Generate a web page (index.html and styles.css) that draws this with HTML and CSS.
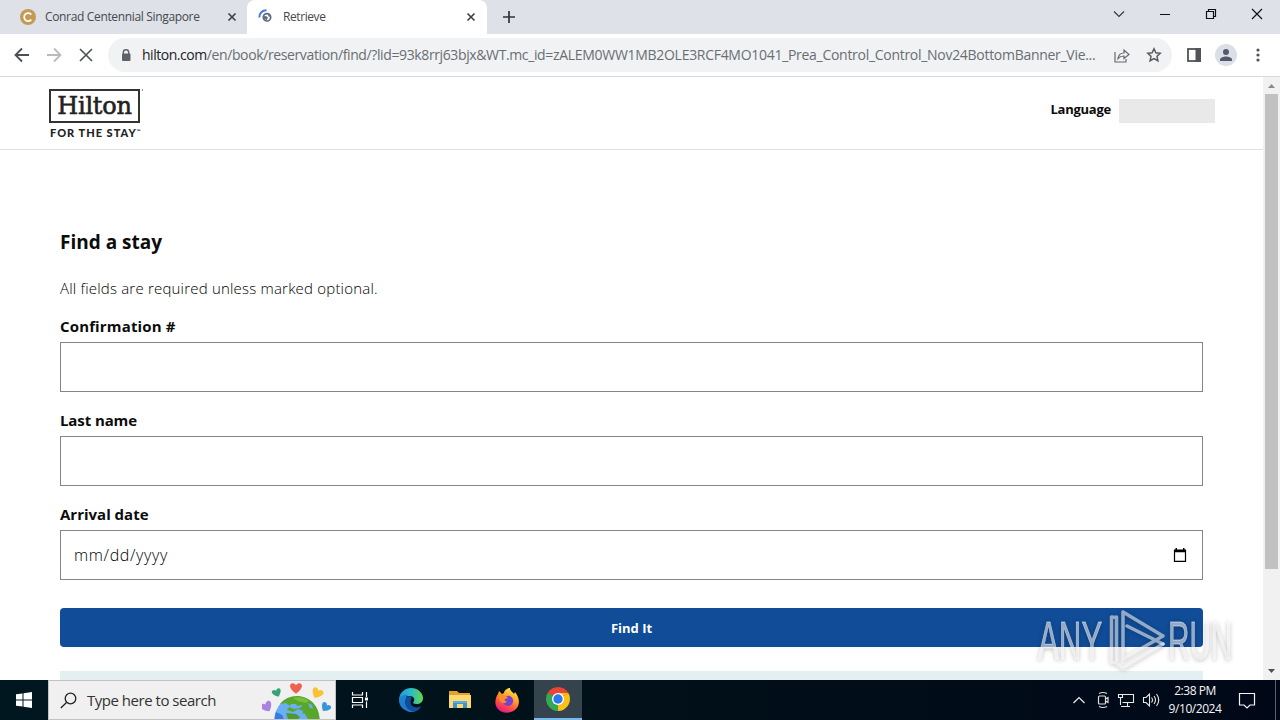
FILE: index.html
```
<!DOCTYPE html>
<html lang="en">
<head>
<meta charset="utf-8">
<title>Retrieve</title>
<link rel="stylesheet" href="styles.css">
</head>
<body>
<div class="screen">
  <div class="tabstrip">
    <div class="tab tab-first">
      <svg class="favicon" width="16" height="16" viewBox="0 0 16 16"><circle cx="8" cy="8" r="8" fill="#c49a55"/><path d="M11.3 5.6A4 4 0 1 0 11.3 10.6" fill="none" stroke="#fff" stroke-width="1.7"/></svg>
      <span class="tab-title title-conrad">Conrad Centennial Singapore</span>
      <svg class="tab-close" width="10" height="10" viewBox="0 0 10 10"><path d="M1.5 1.5l7 7M8.5 1.5l-7 7" stroke="#3c4043" stroke-width="1.6"/></svg>
    </div>
    <div class="tab tab-active">
      <svg class="favicon" width="16" height="16" viewBox="0 0 16 16"><path d="M1.300 8.500A7 7 0 0 1 8.500 1.200" fill="none" stroke="#3f7be0" stroke-width="1.900"/><circle cx="9" cy="8.300" r="3.700" fill="none" stroke="#5f6b7a" stroke-width="1.700"/><path d="M5.500 7l3 .2 1.500 1.600-1.500 2.500L6 9.500zM9.500 5l3 2-1.500 1z" fill="#5f6b7a"/></svg>
      <span class="tab-title title-retrieve">Retrieve</span>
      <svg class="tab-close" width="10" height="10" viewBox="0 0 10 10"><path d="M1.500 1.500l7 7M8.500 1.500l-7 7" stroke="#3c4043" stroke-width="1.600"/></svg>
    </div>
    <svg class="newtab" width="12" height="12" viewBox="0 0 12 12"><path d="M6 0v12M0 6h12" stroke="#303438" stroke-width="1.700"/></svg>
    <div class="window-controls">
      <svg width="12" height="12" viewBox="0 0 12 12"><path d="M1 3.500l5 5 5-5" fill="none" stroke="#333" stroke-width="1.100"/></svg>
      <svg width="12" height="12" viewBox="0 0 12 12"><path d="M1 6.500h10" stroke="#111"/></svg>
      <svg width="12" height="12" viewBox="0 0 12 12"><path d="M1.500 3.500h7v7h-7zM3.500 3.500v-2h7v7h-2" fill="none" stroke="#111" stroke-width="1.200"/></svg>
      <svg width="12" height="12" viewBox="0 0 12 12"><path d="M1 1l10 10M11 1L1 11" stroke="#111" stroke-width="1.200"/></svg>
    </div>
  </div>
  <div class="toolbar">
    <div class="nav">
      <svg width="16" height="16" viewBox="0 0 16 16"><path d="M15 8H2M8 1.500L1.500 8 8 14.500" fill="none" stroke="#4c5054" stroke-width="1.800"/></svg>
      <svg width="16" height="16" viewBox="0 0 16 16"><path d="M1 8h13M8 1.500L14.500 8 8 14.500" fill="none" stroke="#b9bbbd" stroke-width="1.800"/></svg>
      <svg width="16" height="16" viewBox="0 0 16 16"><path d="M2 2l12 12M14 2L2 14" fill="none" stroke="#505458" stroke-width="1.700"/></svg>
    </div>
    <div class="omnibox">
      <svg class="lock" width="10" height="13" viewBox="0 0 10 13"><path d="M2.300 5V3.500a2.700 2.700 0 0 1 5.400 0V5" fill="none" stroke="#5f6368" stroke-width="1.400"/><rect x="1" y="4.500" width="8.500" height="7.500" rx="1" fill="#5f6368"/></svg>
      <span class="url"><span class="host">hilton.com</span><span class="path">/en/book/reservation/find/?lid=93k8rrj63bjx&amp;WT.mc_id=</span><span class="query">zALEM0WW1MB2OLE3RCF4MO1041_Prea_Control_Control_Nov24BottomBanner_Vie...</span></span>
      <svg class="share" width="16" height="15" viewBox="0 0 16 15"><path d="M1 4v10h11v-3M4 10.500c.5-3.500 2.500-5.500 6-5.500V2l5 4.500-5 4V8c-3 0-4.500.7-6 2.500z" fill="none" stroke="#666a6e" stroke-width="1.200"/></svg>
      <svg class="star" width="16" height="16" viewBox="0 0 16 16"><path d="M8 1.800l1.900 4 4.300.5-3.200 3 .9 4.400L8 11.500l-3.900 2.200.9-4.400-3.200-3 4.300-.5z" fill="none" stroke="#565a5e" stroke-width="1.500"/></svg>
    </div>
    <div class="toolbar-end">
      <svg width="14" height="14" viewBox="0 0 14 14"><rect x="1" y="1" width="12" height="12" fill="#fff" stroke="#505458" stroke-width="1.800"/><rect x="8.500" y="0" width="5.500" height="14" fill="#505458"/></svg>
      <svg width="22" height="22" viewBox="0 0 22 22"><circle cx="11" cy="11" r="11" fill="#dcdfe7"/><circle cx="11" cy="8" r="3" fill="#535a6c"/><path d="M5 17v-1.500c0-2 4-3 6-3s6 1 6 3V17z" fill="#535a6c"/></svg>
      <svg width="4" height="14" viewBox="0 0 4 14"><circle cx="2" cy="2" r="1.600" fill="#505458"/><circle cx="2" cy="7" r="1.600" fill="#505458"/><circle cx="2" cy="12" r="1.600" fill="#505458"/></svg>
    </div>
  </div>

  <div class="viewport">
    <div class="page">
      <header class="site-header">
        <div class="brand">
          <div class="brand-row"><span class="brand-box">Hilton</span><i class="brand-mark"></i></div>
          <div class="brand-tag">FOR THE STAY<sup>™</sup></div>
        </div>
        <div class="language"><span>Language</span><i class="skeleton"></i></div>
      </header>
      <main class="form">
        <h1 class="heading">Find a stay</h1>
        <p class="note">All fields are required unless marked optional.</p>
        <div class="field"><label class="l-conf">Confirmation #</label><div class="input"></div></div>
        <div class="field"><label class="l-last">Last name</label><div class="input"></div></div>
        <div class="field"><label class="l-date">Arrival date</label><div class="input"><span class="placeholder">mm/dd/yyyy</span>
          <svg width="14" height="14" viewBox="0 0 14 14"><path d="M1.500 2.500h11v10.800h-11z" fill="none" stroke="#000" stroke-width="1.200"/><path d="M1 1.500h12v2.700H1zM2.500 0H4v2H2.500zM10 0h1.500v2H10z" fill="#000"/></svg></div></div>
        <div class="button"><span>Find It</span></div>
        <div class="panel"></div>
      </main>
    </div>
    <div class="scrollbar">
      <svg width="17" height="17" viewBox="0 0 17 17"><path d="M5 11l3.500-4L12 11z" fill="#8b8b8b"/></svg>
      <div class="thumb"></div>
      <svg width="17" height="17" viewBox="0 0 17 17"><path d="M5 6l3.500 4L12 6z" fill="#505050"/></svg>
    </div>
    <div class="watermark">
      <span class="wm-left">ANY</span>
      <svg width="58" height="64" viewBox="0 0 58 64"><g fill="none" stroke="#fff" stroke-opacity=".55" stroke-width="3.500" stroke-linejoin="round" stroke-linecap="round"><path d="M7 8.500L2.500 8v45l5 1V8M7 54l7 5 40-24"/><path d="M14 3v46M14 3l40 24-40 23M18 17l36 18"/></g></svg>
      <span class="wm-right">RUN</span>
    </div>
  </div>

  <div class="taskbar">
    <div class="start"><svg width="16" height="16" viewBox="0 0 16 16"><path d="M0 2.300l6.500-.9v6.100H0zM7.500 1.200L16 0v7.500H7.500zM0 8.500h6.500v6.100L0 13.700zM7.500 8.500H16V16l-8.500-1.200z" fill="#fff"/></svg></div>
    <div class="search">
      <svg class="glass" width="17" height="17" viewBox="0 0 17 17"><circle cx="10.500" cy="6.500" r="5.300" fill="none" stroke="#222" stroke-width="1.300"/><path d="M6.500 10.500L.8 16" stroke="#222" stroke-width="1.300"/></svg>
      <span>Type here to search</span>
      <svg class="earth" width="72" height="38" viewBox="0 0 72 38">
        <circle cx="35" cy="38" r="22.500" fill="#6aaef3"/><path d="M14 31a22.500 22.500 0 0 0-1.500 7h9c0-5-4-5-7.500-7z" fill="#397ce1"/>
        <path d="M18 23c7-9 21-11 31-3 5 4 8 10 8.500 18H43l-3-4 1-4-5-2-5 3-6-2 3-4-4-3z" fill="#58a62a"/>
        <path d="M29 23l5 0 1 2 6-1-3 3-6 1-5-2zM46 22l4 2 1 4-3-1zM38 31l5 2 3 5h-5z" fill="#6aaef3"/>
        <path d="M24 32l10 1 4 3-2 2H26z" fill="#4d9c2b"/>
        <path d="M31 17c6-2 12 0 16 3l-3 2-8-2z" fill="#78bf3b"/>
        <g transform="translate(34 7.500) scale(1.050)"><path d="M0 5C-7 0-7-5-3-5q2 0 3 2 1-2 3-2c4 0 4 5-3 10z" fill="#f0604e"/></g>
        <g transform="translate(15 12) rotate(-22) scale(.8)"><path d="M0 5C-7 0-7-5-3-5q2 0 3 2 1-2 3-2c4 0 4 5-3 10z" fill="#34a477"/></g>
        <g transform="translate(55 12.500) rotate(28)"><path d="M0 5C-7 0-7-5-3-5q2 0 3 2 1-2 3-2c4 0 4 5-3 10z" fill="#f9c22f"/></g>
        <g transform="translate(5 26) rotate(-30)"><path d="M0 5C-7 0-7-5-3-5q2 0 3 2 1-2 3-2c4 0 4 5-3 10z" fill="#a884e0"/></g>
        <g transform="translate(63.500 26.500) rotate(35) scale(.85)"><path d="M0 5C-7 0-7-5-3-5q2 0 3 2 1-2 3-2c4 0 4 5-3 10z" fill="#3695dc"/></g>
      </svg>
    </div>
    <div class="apps">
      <div class="app app-view"><svg width="18" height="18" viewBox="0 0 18 18"><path d="M1.500 1v3h10V1M1.500 17v-3h10v3M1.500 6.500h10v5h-10zM15.500 1v5M15.500 10.500V17" fill="none" stroke="#fff" stroke-width="1.200"/><path d="M14 6.500h3v3h-3z" fill="#fff"/></svg></div>
      <div class="app app-edge"><svg width="26" height="26" viewBox="0 0 26 26"><defs><linearGradient id="eg" x1="0" x2="1"><stop offset="0" stop-color="#2299df"/><stop offset=".5" stop-color="#29bcc8"/><stop offset="1" stop-color="#68d649"/></linearGradient><linearGradient id="eb" x1="0" y1="0" x2="0" y2="1"><stop offset="0" stop-color="#1b84d2"/><stop offset="1" stop-color="#1f78cf"/></linearGradient></defs>
        <path d="M1 12C2 5 7 1 13 1c7 0 12 5 12 10 0 4-3 6-6.500 6-3 0-4-1-3-2 2-3 0-6-4-6C7 9 2 10 1 14z" fill="url(#eg)"/><path d="M1 13c0-3 4-6 9-5-3 2-3 12 4 15 3 1 6-.5 8-2-4 5-11 5-15 2-4-2-6-6-6-10z" fill="url(#eb)"/><path d="M10 9c-5 3-4 12 3 15 4 1 8-1 10.500-5-5 3-11 1-11-4 0-2 1-3 1-4 0-1-1.500-2-3.500-2z" fill="#104e9c"/></svg></div>
      <div class="app app-files"><svg width="22" height="20" viewBox="0 0 22 20"><path d="M0 1h8l2 2h11v4H0z" fill="#e2a22b"/><path d="M0 5h22v13H0z" fill="#fcd873"/><path d="M4 18v-7h14v7h-4v-4H8v4z" fill="#3e92cf"/><path d="M4 11h14v2H4z" fill="#5aabe0"/></svg></div>
      <div class="app app-fox"><svg width="24" height="25" viewBox="0 0 24 25"><defs><linearGradient id="fx" x1=".8" y1="0" x2=".3" y2="1"><stop offset="0" stop-color="#fff04a"/><stop offset=".4" stop-color="#ffa02b"/><stop offset=".7" stop-color="#ff4e45"/><stop offset="1" stop-color="#e31587"/></linearGradient></defs><path d="M3 6l1-3 3 3 2-1c0-3 4-5 6-5 0 3 3 4 4 6l1-2c5 6 5 13 1 17-5 5-14 5-18 0C-1 17 0 10 3 6z" fill="url(#fx)"/><path d="M7 12c1-3 3-3 5-4 4-1 7 3 6 6-1 4-5 5-8 3-2-1-3-3-3-5z" fill="#7543cf"/><path d="M4 7c2-1 5 0 7 1l2 2-3 1c-1 1 0 3 2 2-2 4-7 2-8-2z" fill="#ff8d27"/></svg></div>
      <div class="app app-current"><svg width="24" height="24" viewBox="0 0 24 24"><path d="M12 12L1.610 6A12 12 0 0 1 22.390 6z" fill="#e94435"/><path d="M12 12L22.390 6A12 12 0 0 1 12 24z" fill="#fbc116"/><path d="M12 12v12A12 12 0 0 1 1.610 6z" fill="#35a853"/><path d="M1.610 6l5.200 9L12 12zM12 24l-5.200-9L12 12z" fill="#35a853"/><path d="M12 24l5.200-9L12 12z" fill="#fbc116"/><path d="M22.390 6H12v6z" fill="#fbc116"/><circle cx="12" cy="12" r="6" fill="#fff"/><circle cx="12" cy="12" r="4.700" fill="#2879ed"/></svg></div>
    </div>
    <div class="tray">
      <svg width="14" height="16" viewBox="0 0 14 16"><path d="M1.500 11L7 5.500l5.500 5.500" fill="none" stroke="#eee" stroke-width="1.200"/></svg>
      <svg width="14" height="18" viewBox="0 0 14 18"><path d="M3.500 5h5q1 0 1 1v6q0 1-1 1h-5q-1 0-1-1V6q0-1 1-1zM9.500 8l2.500-1.500v5L9.500 10M3 2.500q4-2 8 0M3 15.500q4 2 8 0" fill="none" stroke="#ddd" stroke-width="1.200"/></svg>
      <svg width="18" height="16" viewBox="0 0 18 16"><path d="M6 2.500h10.500v8H5.500M4 14.500h9M10.500 10.500v4M1.500 2.500h4v3h-4zM3.500 5.500V13" fill="none" stroke="#e8e8e8" stroke-width="1.100"/></svg>
      <svg width="18" height="16" viewBox="0 0 18 16"><path d="M1.500 5.500H4l3.500-3.500v12L4 10.500H1.500zM9.500 5.500q2 2.500 0 5M12 4q3 4 0 8M14.500 2q4.500 6 0 12" fill="none" stroke="#e8e8e8" stroke-width="1.100"/></svg>
      <div class="clock"><span class="time">2:38 PM</span><span class="date">9/10/2024</span></div>
      <svg class="notice" width="18" height="18" viewBox="0 0 18 18"><path d="M1.500 2.500h15v11.500H12l-3 3-3-3H1.500z" fill="none" stroke="#f3f3f3" stroke-width="1.200"/></svg>
      <i class="desktop-edge"></i>
    </div>
  </div>
</div>
</body>
</html>
```
FILE: styles.css
```
* { box-sizing: border-box; }
body { margin: 0; font-family: "Open Sans", "Noto Sans", sans-serif; color: #0c0c0c; }
svg { display: block; flex: none; }
.screen { width: 1280px; height: 720px; display: flex; flex-direction: column; overflow: hidden; background: #fff; }

.tabstrip { height: 34px; flex: none; background: #dee1e7; display: flex; align-items: center; }
.tab { height: 34px; display: flex; align-items: center; padding-right: 11px; }
.tab-first { width: 247px; padding-left: 20px; padding-right: 10px; }
.tab-active { width: 240px; padding-left: 11px; background: #fff; border-radius: 8px 8px 0 0; }
.tab-title { font-size: 12px; line-height: 16px; white-space: nowrap; color: #45494e; }
.title-conrad { margin-left: 9px; letter-spacing: -0.34px; }
.title-retrieve { margin-left: 9px; letter-spacing: -0.42px; }
.tab-close { margin-left: auto; }
.newtab { margin-left: 16px; }
.window-controls { margin-left: auto; display: flex; gap: 34px; padding-right: 17px; padding-bottom: 6px; }
.toolbar { height: 43px; flex: none; display: flex; align-items: center; border-bottom: 1px solid #d9dadc; padding-left: 14px; }
.nav { width: 94px; display: flex; gap: 16px; }
.omnibox { width: 1064px; height: 34px; border-radius: 17px; background: #f0f2f4; display: flex; align-items: center; padding-left: 13px; }
.url { width: 960px; margin-left: 11px; font-size: 14px; line-height: 20px; white-space: nowrap; color: #6a6e72; }
.host { color: #202124; letter-spacing: -0.47px; }
.path { letter-spacing: -0.38px; }
.query { letter-spacing: -0.29px; }
.share { margin-left: 12px; }
.star { margin-left: 16px; }
.toolbar-end { display: flex; align-items: center; margin-left: 15px; gap: 14px; }
.toolbar-end svg:last-child { margin-left: 5px; }

.viewport { height: 603px; flex: none; display: flex; position: relative; }
.page { width: 1263px; overflow: hidden; }
.site-header { height: 73px; border-bottom: 1px solid #e0e0e0; display: flex; justify-content: space-between; padding: 12px 48px 0; }
.brand-row { display: flex; padding-left: 1px; }
.brand-box { width: 91px; height: 34px; border: 2px solid #333; font: 400 24px/30px "DejaVu Serif", serif; text-align: center; color: #222; -webkit-text-stroke: 0.6px #222; letter-spacing: -0.2px; }
.brand-mark { width: 1px; height: 2px; background: #999; margin-left: 2px; }
.brand-tag { font: 900 11px/14px Lato, sans-serif; letter-spacing: 1px; margin: 3px 0 0 2px; white-space: nowrap; color: #222; }
.brand-tag sup { font-size: 5px; line-height: 0; vertical-align: 4px; letter-spacing: 0; }
.language { display: flex; align-items: center; height: 24px; margin-top: 10px; font-size: 13px; font-weight: 700; letter-spacing: -0.25px; }
.language span { line-height: 20px; margin-bottom: 4px; }
.skeleton { width: 96px; height: 24px; background: #e9e9e9; margin-left: 8px; }
.form { padding: 78px 60px 0; }
.heading { margin: 0; font-size: 19px; line-height: 28px; font-weight: 700; }
.note { margin: 20px 0 0; font-size: 15px; line-height: 24px; font-weight: 300; letter-spacing: 0.2px; color: #000; }
.field { margin-bottom: 16px; }
.note + .field { margin-top: 14px; }
.field label { display: block; width: max-content; height: 28px; line-height: 24px; font-size: 15px; font-weight: 700; }
.l-conf { letter-spacing: 0.15px; }
.l-last { letter-spacing: -0.1px; }
.field .input { height: 50px; border: 1px solid #858589; display: flex; align-items: center; justify-content: space-between; padding: 0 15px 0 13px; }
.placeholder { font-size: 16px; line-height: 24px; font-weight: 300; letter-spacing: 0.65px; color: #000; }
.input svg { margin-bottom: 1px; }
.button { height: 39px; margin-top: 28px; border-radius: 4px; background: #104c97; color: #fff; display: flex; align-items: center; justify-content: center; font-size: 13px; font-weight: 700; }
.panel { height: 20px; margin-top: 24px; background: #e4eff2; }
.scrollbar { width: 17px; background: #f1f1f1; display: flex; flex-direction: column; }
.thumb { width: 13px; height: 475px; margin: 0 2px auto; background: #c1c1c1; }
.watermark { position: absolute; left: 1038px; top: 532px; display: flex; align-items: center; color: rgba(255,255,255,.55); font: 400 53px/64px "Liberation Sans", sans-serif; filter: drop-shadow(0 1px 2px rgba(0,0,0,.4)); }
.watermark span { width: 62px; white-space: nowrap; transform-origin: left; -webkit-text-stroke: 0.8px rgba(255,255,255,.5); }
.watermark .wm-left { transform: scaleX(.59); margin-right: 9px; }
.watermark .wm-right { transform: scaleX(.56); margin-left: 1px; }

.taskbar { height: 40px; flex: none; background: linear-gradient(90deg, #00171f, #011019 50%, #000818); display: flex; }
.start { width: 48px; display: flex; align-items: center; justify-content: center; }
.search { width: 288px; border: 1px solid #c2c2c2; background: #f0f0f0; display: flex; align-items: center; overflow: hidden; }
.glass { margin-left: 11px; }
.search span { margin-left: 10px; font-size: 15px; line-height: 22px; color: #333; white-space: nowrap; letter-spacing: -0.48px; }
.earth { margin-left: auto; margin-right: 1px; }
.apps { display: flex; }
.app { display: flex; align-items: center; justify-content: center; }
.app-view { width: 47px; }
.app-edge { width: 56px; }
.app-files { width: 42px; }
.app-fox { width: 53px; padding-right: 1px; }
.app-current { background: #35434c; border-bottom: 2px solid #76b9ed; width: 48px; }
.tray { margin-left: auto; display: flex; align-items: center; gap: 7px; color: #f5f5f5; }
.tray svg:nth-child(2) { margin-left: 3px; }
.clock { width: 54px; display: flex; flex-direction: column; align-items: center; font-size: 12px; line-height: 18px; white-space: nowrap; letter-spacing: -0.45px; margin-left: 1px; }
.notice { margin-left: 9px; }
.desktop-edge { width: 1px; height: 40px; background: #56616d; margin: 0 4px 0 12px; }
```
